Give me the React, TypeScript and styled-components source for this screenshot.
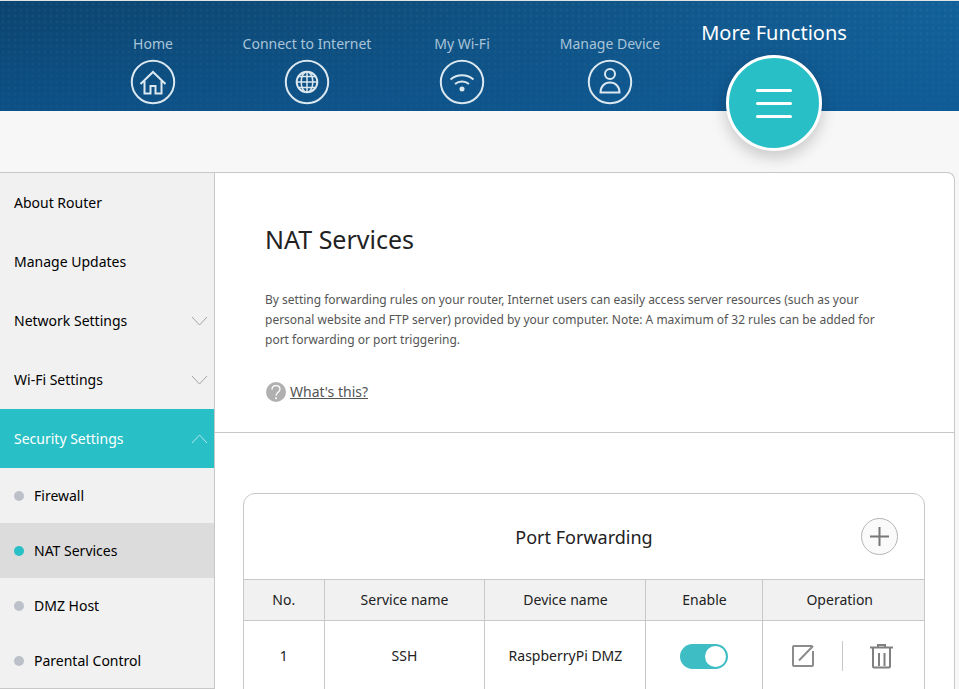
import React, { useState } from "react";
import styled, { createGlobalStyle } from "styled-components";

const teal = "#29bfc6";
const line = "#c8c8c8";

const GlobalStyle = createGlobalStyle`
  *, *::before, *::after { box-sizing: border-box; }
  html, body, #root { height: 100%; }
  body {
    margin: 0;
    overflow: hidden;
    background: #f7f7f7;
    color: #000;
    font-family: "Segoe UI", "Noto Sans", "Open Sans", sans-serif;
    font-size: 14px;
    line-height: 20px;
  }
  button { font: inherit; color: inherit; }
`;

const Page = styled.div`
  display: flex;
  flex-direction: column;
  height: 100vh;
  overflow: hidden;
`;

const Header = styled.header`
  flex: none;
  height: 111px;
  margin-bottom: 61px;
  border-top: 1px solid #dfe3e4;
  background:
    linear-gradient(to bottom, transparent, rgba(14, 88, 148, 0.6)),
    radial-gradient(circle, rgba(255, 255, 255, 0.04) 1px, transparent 2px) 0 0 / 6px 6px,
    linear-gradient(100deg, #0b4470 0%, #0e4c7a 35%, #12619a 100%);
`;

const Nav = styled.nav`
  display: grid;
  grid-template-columns: 154fr 154fr 156fr 140fr 188fr;
  padding: 0 91px 0 76px;
`;

const NavLink = styled.a<{ $active?: boolean }>`
  display: flex;
  flex-direction: column;
  align-items: center;
  gap: ${(p) => (p.$active ? 10 : 5)}px;
  padding-top: ${(p) => (p.$active ? 20 : 33)}px;
  color: ${(p) => (p.$active ? "#fff" : "#a9c4d8")};
  font-size: ${(p) => (p.$active ? 20 : 14)}px;
  line-height: ${(p) => (p.$active ? 24 : 20)}px;
  white-space: nowrap;
  text-decoration: none;
`;

const NavIcon = styled.svg`
  width: 46px;
  height: 46px;
  fill: none;
  stroke: #dce8f0;
  stroke-width: 2;
`;

const MenuDisc = styled.span`
  display: flex;
  flex-direction: column;
  align-items: center;
  justify-content: center;
  gap: 10px;
  width: 96px;
  height: 96px;
  border: 3px solid #fff;
  border-radius: 50%;
  background: ${teal};
  box-shadow: 0 6px 16px rgba(0, 0, 0, 0.2);
`;

const MenuBar = styled.span`
  width: 36px;
  height: 3px;
  border-radius: 2px;
  background: #fff;
`;

const Body = styled.div`
  display: flex;
  flex: 1;
  align-items: flex-start;
  min-height: 0;
  margin-right: 4px;
`;

const Sidebar = styled.nav`
  flex: none;
  width: 215px;
  border: solid ${line};
  border-width: 1px 1px 1px 0;
  background: #f1f1f1;
`;

const MenuItem = styled.button<{ $open?: boolean }>`
  display: flex;
  align-items: center;
  justify-content: space-between;
  width: 100%;
  height: 59px;
  padding: 0 6px 0 14px;
  border: 0;
  background: ${(p) => (p.$open ? teal : "transparent")};
  color: ${(p) => (p.$open ? "#fff" : "#000")};
  text-align: left;
`;

const Chevron = styled.svg<{ $open?: boolean }>`
  width: 17px;
  height: 10px;
  fill: none;
  stroke: ${(p) => (p.$open ? "#b5e8eb" : "#a3a3a3")};
`;

const SubItem = styled.a<{ $current?: boolean }>`
  display: flex;
  align-items: center;
  gap: 10px;
  height: 55px;
  padding: 0 14px;
  background: ${(p) => (p.$current ? "#dcdcdc" : "transparent")};
  color: #000;
  text-decoration: none;
`;

const Dot = styled.span<{ $current?: boolean }>`
  width: 10px;
  height: 10px;
  border-radius: 50%;
  background: ${(p) => (p.$current ? teal : "#bcc0c8")};
`;

const Content = styled.main`
  flex: 1;
  align-self: stretch;
  min-width: 0;
  overflow: hidden;
  border: solid ${line};
  border-width: 1px 1px 0 0;
  border-top-right-radius: 8px;
  background: #fff;
`;

const Intro = styled.section`
  display: flex;
  flex-direction: column;
  align-items: flex-start;
  padding: 50px 50px 30px;
  border-bottom: 1px solid ${line};
`;

const Title = styled.h1`
  margin: 0 0 35px;
  color: #222;
  font-size: 25px;
  font-weight: 400;
  line-height: 32px;
`;

const Description = styled.p`
  max-width: 630px;
  margin: 0 0 32px;
  color: #555;
  font-size: 12px;
  line-height: 20px;
`;

const HelpLink = styled.a`
  display: flex;
  align-items: center;
  gap: 4px;
  padding-left: 1px;
  color: #555;
  text-decoration: none;
`;

const HelpText = styled.span`
  text-decoration: underline;
`;

const HelpIcon = styled.svg`
  width: 20px;
  height: 20px;
`;

const Card = styled.section`
  margin: 60px 29px 0 28px;
  border: 1px solid ${line};
  border-radius: 12px 12px 0 0;
`;

const CardHead = styled.div`
  display: grid;
  grid-template-columns: 1fr auto 1fr;
  align-items: center;
  height: 85px;
  padding: 0 26px;
`;

const CardTitle = styled.h2`
  grid-column: 2;
  margin: 0;
  color: #222;
  font-size: 18px;
  font-weight: 400;
  line-height: 24px;
`;

const AddButton = styled.button`
  display: flex;
  align-items: center;
  justify-content: center;
  justify-self: end;
  width: 37px;
  height: 37px;
  padding: 0;
  border: 1px solid #b5b5b5;
  border-radius: 50%;
  background: #fafafa;
`;

const Table = styled.table`
  width: 100%;
  border-collapse: collapse;
  table-layout: fixed;
  color: #222;
  text-align: center;
`;

const Col = styled.col<{ $share: number }>`
  width: ${(p) => (p.$share / 680) * 100}%;
`;

const HeadCell = styled.th`
  height: 41px;
  padding: 0;
  border: solid ${line};
  border-width: 1px 0 1px 1px;
  background: #f1f1f1;
  font-weight: 400;
  &:first-child { border-left: 0; }
  &:last-child { padding-right: 8px; }
`;

const Cell = styled.td`
  height: 71px;
  padding: 0;
  border-left: 1px solid ${line};
  &:first-child { border-left: 0; }
`;

const Switch = styled.input`
  display: block;
  appearance: none;
  width: 48px;
  height: 25px;
  margin: 0 auto;
  padding: 2px;
  border-radius: 13px;
  background: #b9bdc4;
  &::before {
    content: "";
    display: block;
    width: 21px;
    height: 21px;
    border-radius: 50%;
    background: #fff;
  }
  &:checked { background: #3ebdc4; }
  &:checked::before { margin-left: auto; }
`;

const Actions = styled.div`
  display: flex;
  align-items: center;
  justify-content: space-between;
  padding: 0 30px 0 28px;
`;

const IconButton = styled.button`
  display: flex;
  padding: 0;
  border: 0;
  background: none;
`;

const Separator = styled.span`
  width: 1px;
  height: 30px;
  background: ${line};
`;

const ring = <circle cx="23" cy="23" r="21.200" />;

const navItems = [
  {
    label: "Home",
    icon: (
      <NavIcon viewBox="0 0 46 46" aria-hidden="true">
        {ring}
        <path d="M10.500 25 23 13l12.500 12M14.500 22v12.500h6v-7.500h5v7.500h6V22" />
      </NavIcon>
    ),
  },
  {
    label: "Connect to Internet",
    icon: (
      <NavIcon viewBox="0 0 46 46" aria-hidden="true">
        {ring}
        <circle cx="23" cy="23" r="10.300" />
        <path strokeWidth="1.500" d="M23 12.500v21M12.500 23h21M14.500 17.500h17M14.500 28.500h17" />
        <ellipse strokeWidth="1.500" cx="23" cy="23" rx="5.800" ry="10.300" />
      </NavIcon>
    ),
  },
  {
    label: "My Wi-Fi",
    icon: (
      <NavIcon viewBox="0 0 46 46" aria-hidden="true">
        {ring}
        <path d="M11.500 20.500a18 18 0 0 1 23 0M16 25a11.500 11.500 0 0 1 14 0" />
        <circle cx="23" cy="30" r="2.500" fill="#dce8f0" stroke="none" />
      </NavIcon>
    ),
  },
  {
    label: "Manage Device",
    icon: (
      <NavIcon viewBox="0 0 46 46" aria-hidden="true">
        {ring}
        <circle cx="23" cy="15" r="5" />
        <path d="M13.500 33.500c0-6 4-10 9.500-10s9.500 4 9.500 10z" />
      </NavIcon>
    ),
  },
];

const menu = [
  { label: "About Router" },
  { label: "Manage Updates" },
  { label: "Network Settings", expandable: true },
  { label: "Wi-Fi Settings", expandable: true },
  { label: "Security Settings", expandable: true, open: true },
];

const subMenu = ["Firewall", "NAT Services", "DMZ Host", "Parental Control"];

const columns = [
  { label: "No.", share: 80 },
  { label: "Service name", share: 161 },
  { label: "Device name", share: 161 },
  { label: "Enable", share: 117 },
  { label: "Operation", share: 161 },
];

export default function App() {
  const [enabled, setEnabled] = useState(true);

  return (
    <Page>
      <GlobalStyle />
      <Header>
        <Nav aria-label="Main">
          {navItems.map((item) => (
            <NavLink key={item.label} href="#">
              {item.label}
              {item.icon}
            </NavLink>
          ))}
          <NavLink href="#" $active aria-current="page">
            More Functions
            <MenuDisc>
              <MenuBar />
              <MenuBar />
              <MenuBar />
            </MenuDisc>
          </NavLink>
        </Nav>
      </Header>
      <Body>
        <Sidebar aria-label="Settings">
          {menu.map((item) => (
            <MenuItem key={item.label} $open={item.open}>
              {item.label}
              {item.expandable && (
                <Chevron viewBox="0 0 17 10" $open={item.open} aria-hidden="true">
                  <path d={item.open ? "M1 9l7.500-8L16 9" : "M1 1l7.500 8L16 1"} />
                </Chevron>
              )}
            </MenuItem>
          ))}
          {subMenu.map((label) => (
            <SubItem key={label} href="#" $current={label === "NAT Services"}>
              <Dot $current={label === "NAT Services"} />
              {label}
            </SubItem>
          ))}
        </Sidebar>
        <Content>
          <Intro>
            <Title>NAT Services</Title>
            <Description>
              By setting forwarding rules on your router, Internet users can easily access server
              resources (such as your personal website and FTP server) provided by your computer.
              Note: A maximum of 32 rules can be added for port forwarding or port triggering.
            </Description>
            <HelpLink href="#">
              <HelpIcon viewBox="0 0 20 20" aria-hidden="true">
                <circle cx="10" cy="10" r="10" fill="#b0b0b0" />
                <path
                  d="M6 7.500C6 5 7.800 3.600 10 3.600s4 1.400 4 3.600c0 3-4 3.200-4 6.600"
                  fill="none"
                  stroke="#fff"
                  strokeWidth="1.300"
                />
                <circle cx="10" cy="16.300" r="1" fill="#fff" />
              </HelpIcon>
              <HelpText>What's this?</HelpText>
            </HelpLink>
          </Intro>
          <Card>
            <CardHead>
              <CardTitle>Port Forwarding</CardTitle>
              <AddButton aria-label="Add rule">
                <svg width="19" height="19" viewBox="0 0 19 19" stroke="#777" strokeWidth="2">
                  <path d="M9.500 0v19M0 9.500h19" />
                </svg>
              </AddButton>
            </CardHead>
            <Table>
              <colgroup>
                {columns.map((c) => (
                  <Col key={c.label} $share={c.share} />
                ))}
              </colgroup>
              <thead>
                <tr>
                  {columns.map((c) => (
                    <HeadCell key={c.label} scope="col">
                      {c.label}
                    </HeadCell>
                  ))}
                </tr>
              </thead>
              <tbody>
                <tr>
                  <Cell>1</Cell>
                  <Cell>SSH</Cell>
                  <Cell>RaspberryPi DMZ</Cell>
                  <Cell>
                    <Switch
                      type="checkbox"
                      aria-label="Enable SSH"
                      checked={enabled}
                      onChange={(e) => setEnabled(e.target.checked)}
                    />
                  </Cell>
                  <Cell>
                    <Actions>
                      <IconButton aria-label="Edit SSH">
                        <svg width="24" height="24" viewBox="0 0 24 24" fill="none" stroke="#8c8c8c" strokeWidth="2">
                          <path d="M21.500 2H3a1 1 0 0 0-1 1v18a1 1 0 0 0 1 1h18a1 1 0 0 0 1-1V7M22 2 8 16.500" />
                        </svg>
                      </IconButton>
                      <Separator />
                      <IconButton aria-label="Delete SSH">
                        <svg width="24" height="26" viewBox="0 0 24 26" fill="none" stroke="#808080" strokeWidth="2">
                          <path d="M0 4.500h23M8 4V2h7v2M3 5v18.500a1 1 0 0 0 1 1h15a1 1 0 0 0 1-1V5M9 10v13M14.500 10v13" />
                        </svg>
                      </IconButton>
                    </Actions>
                  </Cell>
                </tr>
              </tbody>
            </Table>
          </Card>
        </Content>
      </Body>
    </Page>
  );
}
